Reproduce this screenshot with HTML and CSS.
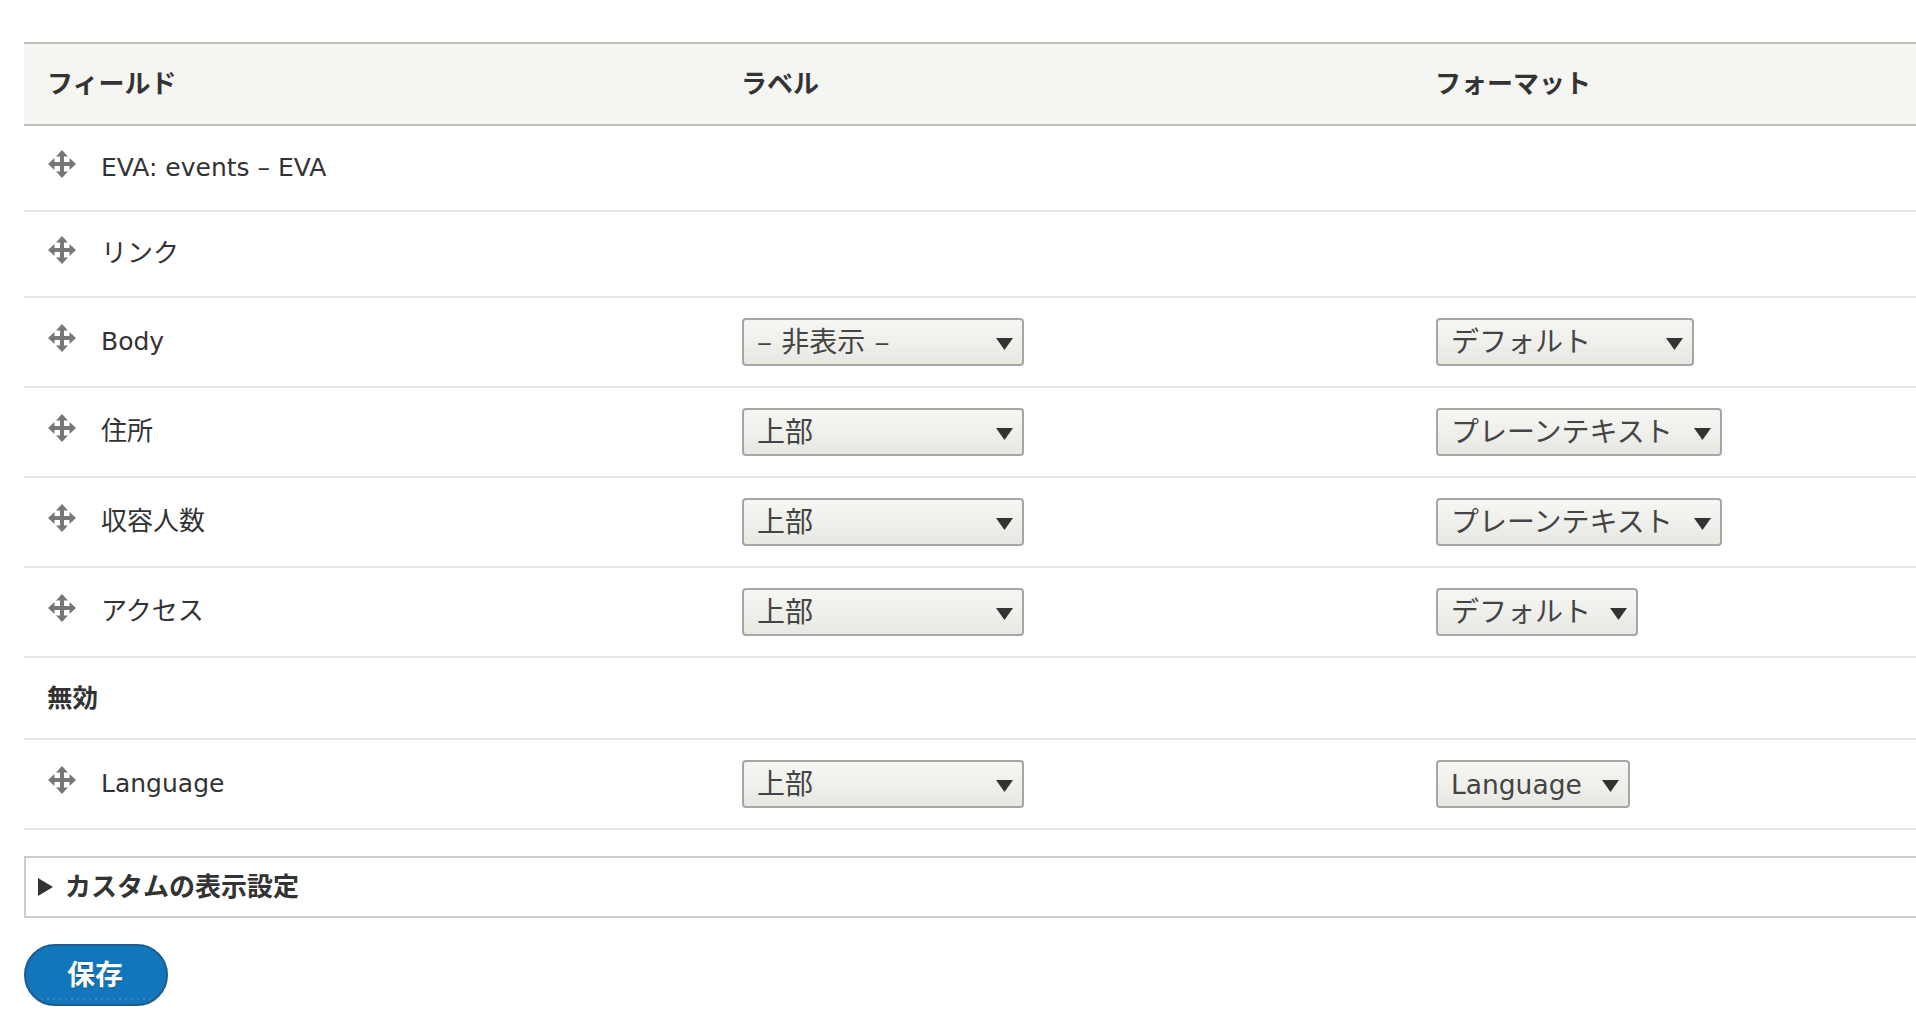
FILE: index.html
```html
<!DOCTYPE html>
<html lang="ja">
<head>
<meta charset="utf-8">
<title>表示管理</title>
<link rel="stylesheet" href="styles.css">
</head>
<body>
<svg class="sprite" width="0" height="0" aria-hidden="true">
  <symbol id="move" viewBox="0 0 28 28"><path d="M14 0l6 6.500h-4v5.500h5.500v-4l6.500 6-6.500 6v-4H16v5.500h4l-6 6.500-6-6.500h4V16H6.500v4L0 14l6.500-6v4H12V6.500H8z"/></symbol>
  <symbol id="down" viewBox="0 0 17 12"><path d="M0 0h17L8.500 12z"/></symbol>
</svg>
<main class="page">
  <table class="fields">
    <thead>
      <tr><th><span class="cjk-up">フィールド</span></th><th><span class="cjk-up">ラベル</span></th><th><span class="cjk-up">フォーマット</span></th></tr>
    </thead>
    <tbody>
      <tr class="row-short">
        <td><div class="field"><svg class="grip"><use href="#move"/></svg><span class="latin">EVA: events – EVA</span></div></td><td></td><td></td>
      </tr>
      <tr class="row-short">
        <td><div class="field"><svg class="grip"><use href="#move"/></svg><span class="cjk-up">リンク</span></div></td><td></td><td></td>
      </tr>
      <tr>
        <td><div class="field"><svg class="grip"><use href="#move"/></svg><span class="latin">Body</span></div></td>
        <td><div class="select w-label"><span class="cjk-up spaced">– 非表示 –</span><svg class="arrow"><use href="#down"/></svg></div></td>
        <td><div class="select w-default-wide"><span class="cjk-up">デフォルト</span><svg class="arrow"><use href="#down"/></svg></div></td>
      </tr>
      <tr>
        <td><div class="field"><svg class="grip"><use href="#move"/></svg><span class="cjk-up">住所</span></div></td>
        <td><div class="select w-label"><span class="cjk-up">上部</span><svg class="arrow"><use href="#down"/></svg></div></td>
        <td><div class="select w-plain"><span class="cjk-up">プレーンテキスト</span><svg class="arrow"><use href="#down"/></svg></div></td>
      </tr>
      <tr>
        <td><div class="field"><svg class="grip"><use href="#move"/></svg><span class="cjk-up">収容人数</span></div></td>
        <td><div class="select w-label"><span class="cjk-up">上部</span><svg class="arrow"><use href="#down"/></svg></div></td>
        <td><div class="select w-plain"><span class="cjk-up">プレーンテキスト</span><svg class="arrow"><use href="#down"/></svg></div></td>
      </tr>
      <tr>
        <td><div class="field"><svg class="grip"><use href="#move"/></svg><span class="cjk-up">アクセス</span></div></td>
        <td><div class="select w-label"><span class="cjk-up">上部</span><svg class="arrow"><use href="#down"/></svg></div></td>
        <td><div class="select w-default"><span class="cjk-up">デフォルト</span><svg class="arrow"><use href="#down"/></svg></div></td>
      </tr>
      <tr class="row-region">
        <td colspan="3"><span class="cjk-up">無効</span></td>
      </tr>
      <tr>
        <td><div class="field"><svg class="grip"><use href="#move"/></svg><span class="latin">Language</span></div></td>
        <td><div class="select w-label"><span class="cjk-up">上部</span><svg class="arrow"><use href="#down"/></svg></div></td>
        <td><div class="select w-language"><span class="latin-select">Language</span><svg class="arrow"><use href="#down"/></svg></div></td>
      </tr>
    </tbody>
  </table>
  <div class="details"><span class="marker"></span><span class="cjk-up">カスタムの表示設定</span></div>
  <button class="save" type="button"><span class="cjk-up">保存</span></button>
</main>
</body>
</html>
```

FILE: styles.css
```css
html, body {
  margin: 0;
  padding: 0;
  background: #fff;
  overflow: hidden;
  height: 1030px;
}

body {
  font-family: "DejaVu Sans", "Noto Sans CJK JP", sans-serif;
  font-size: 26px;
  color: #333;
}

.sprite {
  position: absolute;
}

.page {
  box-sizing: border-box;
  width: 1916px;
  padding: 42px 0 0 24px;
}

.fields {
  border-collapse: collapse;
  table-layout: fixed;
  width: 1892px;
}

.fields th:nth-child(-n+2) {
  width: 694px;
}

.fields th {
  height: 82px;
  padding: 0 0 0 23px;
  box-sizing: border-box;
  text-align: left;
  background: #f5f5f2;
  border-top: 2px solid #bfbfba;
  border-bottom: 2px solid #bfbfba;
  font-weight: 700;
  font-size: 26px;
  font-family: "Noto Sans CJK JP", sans-serif;
}

.cjk-up {
  display: inline-block;
  padding-bottom: 5px;
}

.fields td {
  height: 90px;
  padding: 0 0 0 24px;
  box-sizing: border-box;
  border-bottom: 2px solid #e6e4df;
}

.fields .row-short td {
  height: 86px;
}

.fields .row-region td {
  height: 82px;
  padding-left: 23px;
  font-weight: 700;
  font-family: "Noto Sans CJK JP", sans-serif;
  font-size: 25.500px;
}

.field {
  display: flex;
  align-items: center;
  gap: 25px;
  font-family: "Noto Sans CJK JP", sans-serif;
  font-size: 26px;
  line-height: 34px;
}

.field .cjk-up {
  padding-bottom: 7px;
}

.latin {
  font-family: "DejaVu Sans", sans-serif;
  font-size: 25px;
  padding-bottom: 1px;
}

.latin-select {
  font-family: "DejaVu Sans", sans-serif;
  font-size: 26.500px;
}

.spaced {
  word-spacing: 3px;
}

.grip {
  width: 28px;
  height: 28px;
  fill: #777;
  flex: none;
  margin-top: -8px;
}

.select {
  display: flex;
  align-items: center;
  justify-content: space-between;
  box-sizing: border-box;
  height: 48px;
  padding: 0 9px 0 13px;
  border: 2px solid #a6a6a6;
  border-radius: 4px;
  background: linear-gradient(#f6f6f3, #e8e8e3);
  font-family: "Noto Sans CJK JP", sans-serif;
  font-size: 28px;
  color: #444;
}

.arrow {
  width: 17px;
  height: 12px;
  fill: #333;
  flex: none;
  margin-top: 4px;
}

.w-label { width: 282px; }
.w-default-wide { width: 258px; }
.w-plain { width: 286px; }
.w-default { width: 202px; }
.w-language { width: 194px; }

.details {
  display: flex;
  align-items: center;
  gap: 12px;
  box-sizing: border-box;
  width: 1892px;
  height: 62px;
  margin-top: 26px;
  padding-left: 12px;
  border: 2px solid #ccc;
  border-right: 0;
  font-family: "Noto Sans CJK JP", sans-serif;
  font-weight: 700;
  font-size: 26px;
}

.marker {
  width: 0;
  height: 0;
  border-left: 15px solid #333;
  border-top: 9px solid transparent;
  border-bottom: 9px solid transparent;
}

.save {
  display: block;
  box-sizing: border-box;
  width: 144px;
  height: 62px;
  margin-top: 26px;
  padding: 0 2px 0 0;
  border: 2px solid #1e5c90;
  border-radius: 31px;
  background: radial-gradient(circle, #4a86b8 0.6px, transparent 1.100px) center bottom 2px / 6px 6px repeat-x, #1276bd;
  color: #fff;
  font-family: "Noto Sans CJK JP", sans-serif;
  font-size: 28px;
  font-weight: 700;
  text-shadow: 0 1px 1px #0d4f80;
}
```
